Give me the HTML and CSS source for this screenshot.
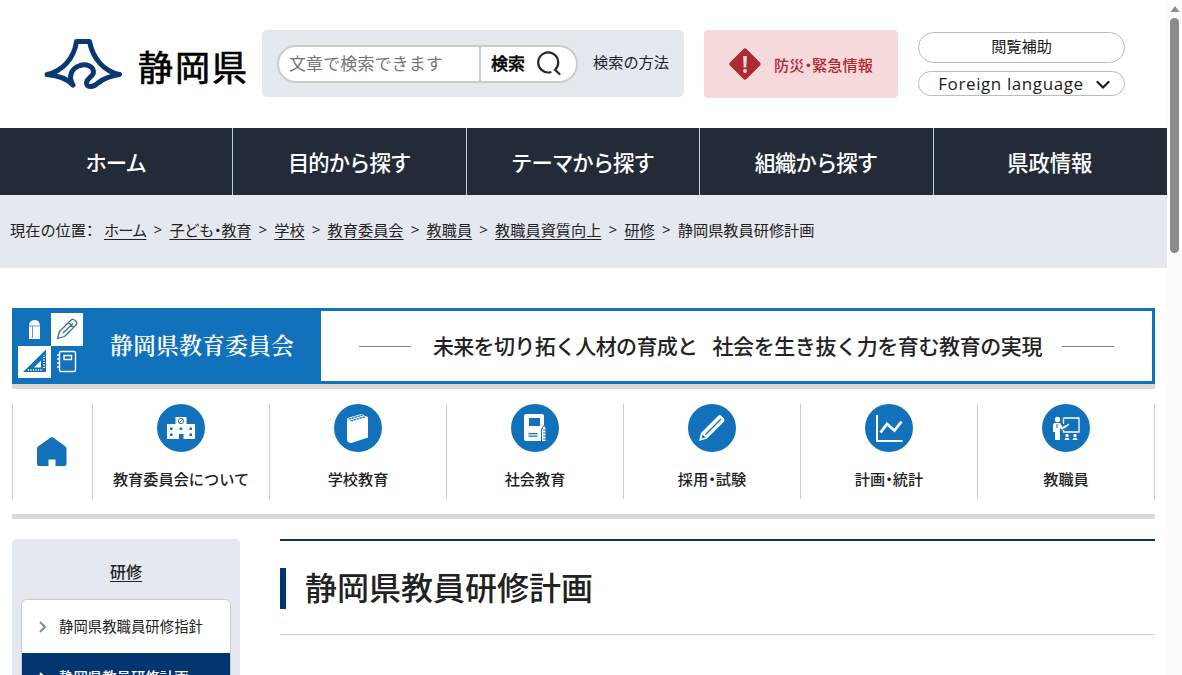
FILE: index.html
```
<!DOCTYPE html>
<html lang="ja">
<head>
<meta charset="utf-8">
<title>静岡県教員研修計画</title>
<link rel="stylesheet" href="styles.css">
</head>
<body>
<div class="window">
<div class="page">
  <header class="header">
    <a class="logo">
      <svg class="logo-mark" width="80" height="54" viewBox="0 0 80 54" fill="none" stroke="#083870" stroke-width="5" stroke-linecap="round" stroke-linejoin="round">
        <path d="M30 48C24 41 14 38.500 4 37.500C19 34.500 31 22 33.500 4.500H46.500C50 22 61 34.500 76.500 37.500C67 39 61 41 55 46C50 51 43 50.500 43.500 45.500C44.500 40.500 50.500 39.500 50.500 35C50.500 29.500 44 26.500 37 28.500C28 31.500 25 40 30 48"/>
      </svg>
      <span class="logo-name">静岡県</span>
    </a>
    <div class="search">
      <div class="search-form">
        <span class="search-input">文章で検索できます</span>
        <span class="search-button">検索
          <svg width="26" height="26" viewBox="0 0 26 26" fill="none" stroke="#25282e" stroke-width="2.200" stroke-linecap="round"><path d="M14.500 21.200A10 10 0 1 1 19 18.800L23.500 23"/></svg>
        </span>
      </div>
      <a class="search-help">検索の方法</a>
    </div>
    <a class="emergency">
      <svg width="32" height="32" viewBox="0 0 32 32"><path d="M14.200 1.200Q16-.6 17.800 1.200L30.800 14.200Q32.600 16 30.800 17.800L17.800 30.800Q16 32.600 14.200 30.800L1.200 17.800Q-.6 16 1.200 14.200Z" fill="#ae2a31"/><path d="M14.200 8h3.600l-.5 11.500h-2.600z" fill="#f8dfe0"/><circle cx="16" cy="23" r="1.900" fill="#f8dfe0"/></svg>
      <span>防災<em>・</em>緊急情報</span>
    </a>
    <div class="tools">
      <a class="tool tool-assist">閲覧補助</a>
      <a class="tool tool-language"><span>Foreign language</span><svg width="14" height="10" viewBox="0 0 14 10" fill="none" stroke="#1b1b1b" stroke-width="2.200" stroke-linecap="round"><path d="M1.500 2L7 7.500L12.500 2"/></svg></a>
    </div>
  </header>
  <nav class="global-nav">
    <a class="nav-home">ホーム</a><a class="nav-purpose">目的から探す</a><a class="nav-theme">テーマから探す</a><a class="nav-org">組織から探す</a><a>県政情報</a>
  </nav>
  <div class="crumbs">
    <span class="crumb-label">現在の位置<em>：</em></span><a class="crumb-home">ホーム</a><i>&gt;</i><a class="crumb-child">子ども<em>・</em>教育</a><i>&gt;</i><a>学校</a><i>&gt;</i><a>教育委員会</a><i>&gt;</i><a>教職員</a><i>&gt;</i><a>教職員資質向上</a><i>&gt;</i><a>研修</a><i>&gt;</i><span>静岡県教員研修計画</span>
  </div>
  <div class="board">
    <div class="banner">
      <div class="banner-name">
        <svg class="tiles" width="66" height="66" viewBox="0 0 66 66">
          <path d="M33 0h32v33H33zM0 33h33v32H0z" fill="#fff"/>
          <path d="M11 13Q11 7 16.500 7T22 13V26H11z" fill="#fff"/>
          <path d="M11 13H22M14.500 13V25" stroke="#5b9bcf" fill="none"/>
          <g fill="none" stroke="#3d6f9e" stroke-width="1.300" stroke-linejoin="round"><path d="M39.500 25.500L41.500 18.500L53 7Q55 5.500 57.500 8Q59.500 10 58 12L46.500 23.500ZM45 20L55 10.500M50.500 9.500L55.500 14.500"/></g>
          <path d="M5 59L28 36.500V59zM16 54.500H23V47.500z" fill="#1171ba" fill-rule="evenodd"/>
          <path d="M10 57H24M26 55V42" fill="none" stroke="#fff" stroke-width="2" stroke-dasharray="1 1.500"/>
          <g fill="none" stroke="#fff" stroke-width="1.400"><rect x="41.500" y="38.500" width="16" height="20" rx="1.500"/><path d="M46 42.500h7.500v4H46z"/><path d="M40 41v16" stroke-dasharray="2 2"/></g>
        </svg>
        <span>静岡県教育委員会</span>
      </div>
      <div class="banner-copy"><b></b><span class="copy-a">未来を切り拓く人材の育成と</span><span class="copy-b">社会を生き抜く力を育む教育の実現</span><b></b></div>
    </div>
    <nav class="board-nav">
      <a class="board-home"><svg width="30" height="30" viewBox="0 0 30 30"><path d="M13.800.6Q15-.4 16.200.6L28.500 9.600Q29.500 10.400 29.500 12V27Q29.500 29 27.500 29H18.500V22.500H11.500V29H2Q0 29 0 27V12Q0 10.400 1 9.600z" fill="#1171ba"/></svg></a>
      <a class="about"><svg width="48" height="48" viewBox="0 0 48 48"><circle cx="24" cy="24" r="24" fill="#1171ba"/><path d="M18.500 13h11v7H38v15H26.500v-5h-4.500v5H10V20h8.500z" fill="#fff"/><circle cx="24" cy="17" r="2.700" fill="#fff" stroke="#1171ba" stroke-width=".9"/><path d="M22.500 18.500l3-3" stroke="#1171ba" stroke-width=".8"/><path d="M13 23.500h2.500V26H13zM13 29.500h2.500V32H13zM22.700 23.500h2.500V26h-2.500zM32.500 23.500H35V26h-2.500zM32.500 29.500H35V32h-2.500z" fill="#1171ba"/></svg><span>教育委員会について</span></a>
      <a><svg width="48" height="48" viewBox="0 0 48 48"><circle cx="24" cy="24" r="24" fill="#1171ba"/><path d="M13 15.500Q13 14 15 13.500L27.500 10L30 11.500L34 13V33.500L17.500 39Q13 38.500 13 36z" fill="#fff"/><path d="M14.500 15.200L28.500 11.200M16.500 17L31 12.700" stroke="#1171ba" stroke-width="1.300" stroke-dasharray="2.500 .6"/></svg><span>学校教育</span></a>
      <a><svg width="48" height="48" viewBox="0 0 48 48"><circle cx="24" cy="24" r="24" fill="#1171ba"/><path d="M15 10H31Q33 10 33 12V21L30 25V37H15Q13 37 13 35V12Q13 10 15 10z" fill="#fff"/><path d="M18 14h11v8H18zM17.500 29h9v1.200h-9zM17.500 31.500h9v1.200h-9z" fill="#1171ba"/><path d="M31 26L33 22L34.500 24V37H31z" fill="#fff"/><path d="M32 26h3M32 29h3M32 32h3M32 35h3" stroke="#1171ba"/></svg><span>社会教育</span></a>
      <a><svg width="48" height="48" viewBox="0 0 48 48"><circle cx="24" cy="24" r="24" fill="#1171ba"/><path d="M11 37L13 29L30.500 11.500Q32 10.500 33.500 12L36 14.500Q37.200 16 36 17.500L19 34.500z" fill="#fff"/><path d="M13.500 34.500L14.500 30.500L17.500 33.500z" fill="#1171ba"/><path d="M17.500 30.500L33 15" stroke="#1171ba" stroke-width="1.200"/></svg><span>採用<em>・</em>試験</span></a>
      <a><svg width="48" height="48" viewBox="0 0 48 48"><circle cx="24" cy="24" r="24" fill="#1171ba"/><path d="M12 11V37H37.500" fill="none" stroke="#fff" stroke-width="2"/><path d="M15.500 28.500L22 20L29.500 26.500L36.500 17.500" fill="none" stroke="#fff" stroke-width="2.800"/></svg><span>計画<em>・</em>統計</span></a>
      <a><svg width="48" height="48" viewBox="0 0 48 48"><circle cx="24" cy="24" r="24" fill="#1171ba"/><circle cx="15.500" cy="15.500" r="2.700" fill="#fff"/><path d="M12 19H18L20.500 23L24 21L25 22L20 26L18 24V36H13V28H11V21z" fill="#fff"/><path d="M15 20v4" stroke="#1171ba"/><path d="M21.500 14H37V28H21.500V26M21.500 20V14M22 24L27 20" fill="none" stroke="#fff" stroke-width="1.300"/><circle cx="25" cy="31.500" r="1.700" fill="#fff"/><circle cx="33" cy="31.500" r="1.700" fill="#fff"/><path d="M22.500 36q0-2.300 2.500-2.300t2.500 2.300zM30.500 36q0-2.300 2.500-2.300t2.500 2.300z" fill="#fff"/></svg><span>教職員</span></a>
    </nav>
  </div>
  <div class="content">
    <aside class="side">
      <a class="side-title">研修</a>
      <div class="side-menu">
        <a><svg width="8" height="12" viewBox="0 0 8 12" fill="none" stroke="#7291b0" stroke-width="2"><path d="M1 1l5 5l-5 5"/></svg><span>静岡県教職員研修指針</span></a>
        <a class="current"><svg width="8" height="12" viewBox="0 0 8 12" fill="none" stroke="#fff" stroke-width="2"><path d="M1 1l5 5l-5 5"/></svg><span>静岡県教員研修計画</span></a>
      </div>
    </aside>
    <main class="main"><h1>静岡県教員研修計画</h1></main>
  </div>
</div>
<div class="scrollbar"><svg width="10" height="6" viewBox="0 0 10 6"><path d="M5 0l4.500 6h-9z" fill="#8b8b8b"/></svg><div class="thumb"></div></div>
</div>
</body>
</html>
```
FILE: styles.css
```
* { box-sizing: border-box; }
body { margin: 0; background: #fff; color: #222; font-family: "Noto Sans CJK JP", sans-serif; font-size: 15.2px; overflow: hidden; }
svg { display: block; flex: none; }
a, span { white-space: nowrap; }
em { font-style: normal; letter-spacing: 0; margin: 0 -.25em; }
.window { display: flex; height: 675px; overflow: hidden; }
.page { width: 1167px; flex: none; }

.header { display: flex; align-items: flex-start; height: 128px; padding-top: 30px; }
.logo { display: flex; width: 262px; padding: 7px 0 0 43px; color: #000; }
.logo-name { margin-left: 15px; padding-top: 3px; font-size: 35px; line-height: 52px; letter-spacing: 2px; -webkit-text-stroke: .7px #000; }
.search { display: flex; align-items: center; width: 422px; height: 67px; padding-left: 15px; background: #e4e8ef; border-radius: 5px; }
.search-form { display: flex; width: 301px; height: 38px; background: #fff; border: 2px solid #ccc; border-radius: 19px; line-height: 32px; }
.search-input { width: 200px; padding-left: 10px; font-size: 17px; color: #757575; letter-spacing: .1px; }
.search-button { display: flex; align-items: center; flex: 1; padding: 0 0 1px 10px; border-left: 2px solid #ccc; color: #000; font-size: 17px; font-weight: 500; -webkit-text-stroke: .4px #000; }
.search-button svg { margin: 1px 0 0 11px; }
.search-help { margin: 0 0 5px 15px; font-size: 15.2px; }
.emergency { display: flex; align-items: center; width: 194px; height: 68px; margin-left: 20px; padding-left: 25px; background: #f5d9db; border-radius: 4px; color: #ae2a31; font-weight: 500; font-size: 15.2px; }
.emergency span { margin-left: 13px; letter-spacing: .05px; }
.tools { display: flex; flex-direction: column; gap: 8px; width: 207px; margin: 2px 0 0 20px; }
.tool { display: flex; justify-content: center; align-items: center; border: 1px solid #bbb; border-radius: 16px; color: #1b1b1b; }
.tool-assist { height: 31px; padding-bottom: 5px; }
.tool-language { height: 25px; font-family: "Open Sans", sans-serif; font-size: 17px; letter-spacing: .6px; }
.tool-language span { margin-left: 5px; }
.tool-language svg { margin: 2px 0 0 12px; }

.global-nav { display: grid; grid-template-columns: repeat(5, 1fr); height: 67px; background: #232b38; color: #fff; font-size: 21.3px; font-weight: 500; line-height: 67px; text-align: center; }
.global-nav a { padding-right: 1px; }
.global-nav a:not(:last-child) { border-right: 1px solid #c1cede; }
.nav-home, .nav-purpose, .nav-theme, .nav-org { letter-spacing: -.9px; }

.crumbs { display: flex; height: 73px; padding: 23px 0 0 10px; background: #e4e8ef; line-height: 22px; }
.crumbs a { text-decoration: underline; text-underline-offset: 3px; }
.crumbs i { width: 23px; text-align: center; font-family: "Open Sans", sans-serif; font-style: normal; }
.crumb-label { width: 94px; letter-spacing: 0; }
.crumb-home { letter-spacing: -.9px; }
.crumb-child { letter-spacing: -.35px; }

.board { width: 1143px; margin: 40px 0 0 12px; }
.banner { display: flex; height: 81px; background: #1171ba; border-bottom: 5px solid #dadada; padding: 3px; }
.banner-name { display: flex; align-items: center; width: 306px; color: #fff; font-family: "Noto Serif CJK JP", "Noto Sans CJK JP", serif; font-size: 23px; font-weight: 600; padding-left: 3px; }
.banner-name span { margin: 0 0 4px 26px; }
.banner-copy { display: flex; align-items: center; justify-content: center; flex: 1; background: #fff; font-size: 21px; font-weight: 500; }
.banner-copy b { width: 52px; height: 1px; background: #888; }
.banner-copy span { margin-bottom: 3px; }
.banner-copy .copy-a { margin-left: 22px; margin-right: 15px; letter-spacing: -.65px; }
.banner-copy .copy-b { margin-right: 20px; letter-spacing: -.4px; }
.board-nav { display: grid; grid-template-columns: 80px repeat(5, 177px) 178px; height: 130px; padding: 15px 0; border-bottom: 5px solid #dadada; font-weight: 500; }
.board-nav a { display: flex; flex-direction: column; align-items: center; border-left: 1px solid #ccc; height: 95px; }
.board-nav a:last-child { border-right: 1px solid #ccc; }
.board-nav .board-home { padding: 33px 2px 0 0; }
.board-nav span { margin-top: 15px; line-height: 22px; }

.content { display: flex; gap: 40px; margin: 20px 0 0 12px; }
.side { width: 228px; height: 240px; padding: 20px 9px; background: #e4e8ef; border-radius: 5px; text-align: center; }
.side-title { display: block; height: 40px; font-size: 16px; line-height: 25px; text-decoration: underline; text-underline-offset: 3px; font-weight: 500; }
.side-menu { overflow: hidden; border: 1px solid #ccc; border-radius: 6px; background: #fff; font-size: 14.4px; }
.side-menu a { display: flex; align-items: center; gap: 12px; height: 53px; padding-left: 17px; }
.side-menu span { margin-bottom: 3px; }
.side-menu .current { height: 50px; background: #03366f; color: #fff; font-weight: 500; }
.main { width: 875px; height: 96px; border-top: 2px solid #0a3464; border-bottom: 1px solid #ccc; padding-top: 27px; }
h1 { margin: 0; height: 41px; border-left: 6px solid #03366f; padding-left: 19px; font-size: 32px; font-weight: 500; line-height: 37px; }

.scrollbar { width: 15px; background: #fcfcfc; padding: 6px 3px; }
.thumb { width: 9px; height: 235px; margin-top: 6px; border-radius: 5px; background: #8b8b8b; }
```
